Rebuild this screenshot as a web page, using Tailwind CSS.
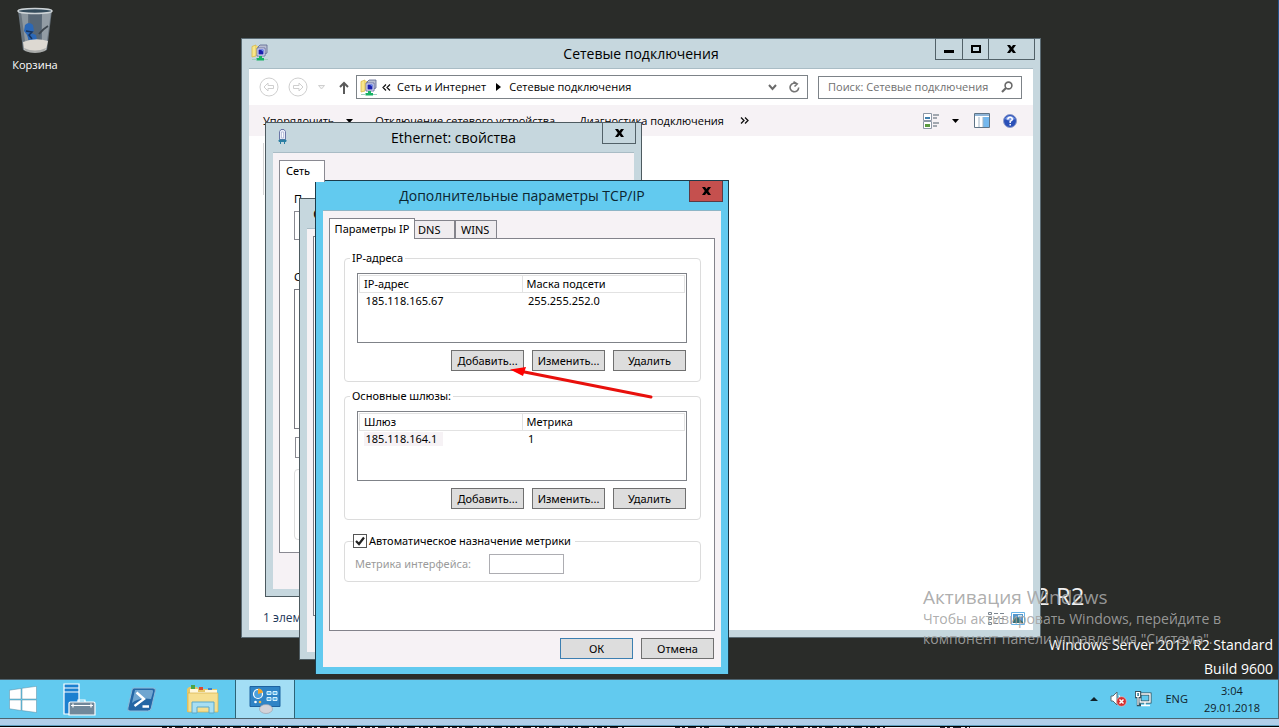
<!DOCTYPE html>
<html lang="ru">
<head>
<meta charset="utf-8">
<title>Сетевые подключения</title>
<script src="https://cdn.jsdelivr.net/npm/@tailwindcss/browser@4"></script>
</head>
<body class="h-screen overflow-hidden flex flex-col bg-[#2a2c29] font-['Open_Sans','Noto_Sans',sans-serif] text-[11px] leading-4 text-black cursor-default">

<svg class="hidden">
  <defs>
    <symbol id="net" viewBox="0 0 17 17">
      <path d="M1 2.500 5 1v11l-4 1z" fill="#f7e78c" stroke="#d9b945" stroke-width=".8"/>
      <path d="M5 2h3v9H5z" fill="#f3dc6c"/>
      <path d="M9 1h7v8l-2 1H7V3z" fill="#b9bfd0" stroke="#5c6590" stroke-width=".8"/>
      <path d="M6 4h8v8H6z" fill="#eef1fb" stroke="#5861a0" stroke-width=".8"/>
      <path d="M7.500 5.500h5v5h-5z" fill="#1a1fae"/>
      <path d="M9.500 5.500h3v2.500z" fill="#6b8df0"/>
      <path d="M8 12h3v2h2v2.500H5.500V14H8z" fill="#17b264"/>
      <path d="M1 15.500h4.500M13 15.500h4" stroke="#9fd0c0"/>
    </symbol>
    <symbol id="cross" viewBox="0 0 9 8">
      <path d="M0 0h3l1.500 2L6 0h3L6.200 4 9 8H6L4.500 6 3 8H0l2.800-4z" fill="currentColor"/>
    </symbol>
  </defs>
</svg>

<main class="relative flex-1 border-r border-[#24548c]">

  <!-- Desktop shortcut -->
  <a href="#" class="absolute left-0 top-1 w-[70px] flex flex-col items-center text-white">
    <svg class="w-[40px] h-[52px]" viewBox="0 0 40 52">
      <path d="M3 6 8 46q12 5 24 0l5-40z" fill="#69757f"/>
      <path d="M6 8l5 36h5L14 8z" fill="#b8c1c8" opacity=".45"/>
      <path d="M27 8l-2 36h6l5-36z" fill="#c5ccd2" opacity=".45"/>
      <path d="M13 10h14v26H13z" fill="#50606f" opacity=".7"/>
      <path d="M10 21q4-4 8 0l1 6-3 2 5 2 1 5-8 1-2-6-3-4z" fill="#2b68b7"/>
      <path d="M11 27l6 1-3 3 3 4" stroke="#17345e" stroke-width="1.500" fill="none"/>
      <path d="M24 30q4-5 9-8" stroke="#3d464e" stroke-width="2" fill="none"/>
      <path d="M8 38q12-5 25-1l-2 9q-10 4-22 0z" fill="#ddd9d2"/>
      <path d="M9 44q11 5 22 0l-1 3q-10 4-20 0z" fill="#a9aba9"/>
      <ellipse cx="20" cy="7" rx="17" ry="2.500" fill="#334a5a" stroke="#cdd3d6" stroke-width="1.500"/>
    </svg>
    <span class="mt-px">Корзина</span>
  </a>

  <p class="absolute left-[1036px] top-[580px] text-[24px] leading-8 text-[#f0f0f0]">2 R2</p>
  <p class="absolute right-[5px] top-[633px] text-right text-[14px] leading-6 text-white">Windows Server 2012 R2 Standard<br>Build 9600</p>

  <!-- Network connections window -->
  <section class="absolute left-[241px] top-[38px] w-[800px] h-[600px] border border-[#5b6b73] bg-[#c6d7de] px-[7px] pb-[7px] flex flex-col">
    <header class="relative h-[29px] shrink-0 flex items-center justify-center">
      <svg class="absolute left-[2px] top-[5px] w-[17px] h-[17px]"><use href="#net"/></svg>
      <h1 class="text-[14px] leading-5">Сетевые подключения</h1>
      <div class="absolute right-[-2px] top-[-1px] flex h-[22px] border border-[#526168]">
        <button aria-label="Свернуть" class="w-[27px] flex items-center justify-center border-r border-[#526168]"><span class="w-[10px] h-[3px] bg-black mt-1"></span></button>
        <button aria-label="Развернуть" class="w-[26px] flex items-center justify-center border-r border-[#526168]"><span class="w-[10px] h-[8px] border-2 border-black"></span></button>
        <button aria-label="Закрыть" class="w-[45px] flex items-center justify-center"><svg class="w-[9px] h-[8px]"><use href="#cross"/></svg></button>
      </div>
    </header>
    <div class="flex-1 bg-white border-t border-[#a9bcc5] flex flex-col">
      <nav class="flex items-center h-[36px] pl-[10px] pr-[11px] shrink-0">
        <button aria-label="Назад" class="w-[20px]"><svg class="w-[20px] h-[20px]" viewBox="0 0 20 20" fill="none" stroke="#cfcfcf"><circle cx="10" cy="10" r="9"/><path d="M5 10l4-4v2.500h5.500v3H9V14z"/></svg></button>
        <button aria-label="Вперёд" class="ml-[9px] w-[20px]"><svg class="w-[20px] h-[20px]" viewBox="0 0 20 20" fill="none" stroke="#cfcfcf"><circle cx="10" cy="10" r="9"/><path d="M15 10l-4-4v2.500H5.500v3H11V14z"/></svg></button>
        <svg class="ml-[10px] w-[7px] h-[5px]" viewBox="0 0 7 5"><path d="M.5.500h6l-3 3.500z" fill="#f4f4f4" stroke="#cfcfcf"/></svg>
        <button aria-label="Вверх" class="ml-[14px] w-[10px]"><svg class="w-[10px] h-[13px]" viewBox="0 0 10 13" fill="none" stroke="#5a5a5a" stroke-width="2"><path d="M5 13V2M1 6l4-4 4 4"/></svg></button>
        <div class="ml-[7px] flex-1 h-[24px] border border-[#7d8388] flex items-center pl-[3px] pr-[7px]">
          <svg class="w-[17px] h-[17px]"><use href="#net"/></svg>
          <svg class="ml-[5px] w-[9px] h-[7px]" viewBox="0 0 9 7" fill="none" stroke="#111" stroke-width="1.200"><path d="M4 .5l-3 3 3 3M8 .5l-3 3 3 3"/></svg>
          <a href="#" class="ml-[6px]">Сеть и Интернет</a>
          <svg class="ml-[10px] w-[5px] h-[8px]" viewBox="0 0 5 8"><path d="M0 0l5 4-5 4z"/></svg>
          <a href="#" class="ml-[8px]">Сетевые подключения</a>
          <svg class="ml-auto w-[9px] h-[7px]" viewBox="0 0 9 7" fill="none" stroke="#6a6a6a" stroke-width="2"><path d="M1 1l3.500 4L8 1"/></svg>
          <svg class="ml-[12px] w-[11px] h-[12px]" viewBox="0 0 11 12" fill="none" stroke="#757575" stroke-width="1.600"><path d="M8 3A4.300 4.300 0 1 0 9.700 6.500M4.500 0.800 8.200 3 5.500 5.500"/></svg>
        </div>
        <label class="ml-[10px] w-[204px] h-[23px] border border-[#7d8388] flex items-center pl-[9px] pr-[8px]">
          <input aria-label="Поиск" placeholder="Поиск: Сетевые подключения" class="min-w-0 flex-1 placeholder:text-[#6f6f6f] outline-none">
          <svg class="w-[12px] h-[12px]" viewBox="0 0 12 12" fill="none" stroke="#6a6a6a" stroke-width="1.600"><circle cx="7.500" cy="4.500" r="3.400"/><path d="M5 7 1 11" stroke-width="2.200"/></svg>
        </label>
      </nav>
      <div class="h-[31px] shrink-0 bg-[#f6f2f5] flex items-center pl-[14px] pr-[16px]">
        <button class="flex items-center gap-[12px]">Упорядочить <svg class="w-[7px] h-[4px]" viewBox="0 0 7 4"><path d="M0 0h7L3.500 4z"/></svg></button>
        <button class="ml-[22px]">Отключение сетевого устройства</button>
        <button class="ml-[24px]">Диагностика подключения</button>
        <button aria-label="Ещё" class="ml-[16px]"><svg class="w-[9px] h-[7px]" viewBox="0 0 9 7" fill="none" stroke="#111" stroke-width="1.300"><path d="M1 .5l3 3-3 3M5 .5l3 3-3 3"/></svg></button>
        <button aria-label="Вид" class="ml-auto flex items-center gap-[13px]">
          <svg class="w-[16px] h-[16px]" viewBox="0 0 16 16"><path d="M.5.500h8v7h-8zM.5 8.500h8v7h-8z" fill="#fff" stroke="#8c97a5"/><path d="M2 4h5v2H2z" fill="#3f7fae"/><path d="M2 11h5v3H2z" fill="#5a9a3f"/><path d="M10 2h6M10 5h4M10 10h6M10 13h4" stroke="#4f5f6b"/></svg>
          <svg class="w-[7px] h-[4px]" viewBox="0 0 7 4"><path d="M0 0h7L3.500 4z"/></svg>
        </button>
        <button aria-label="Область просмотра" class="ml-[15px]"><svg class="w-[16px] h-[15px]" viewBox="0 0 16 15"><path d="M.5.500h15v14H.500z" fill="#fff" stroke="#5f7487"/><path d="M1 1h14v2H1z" fill="#8fb4d6"/><path d="M9 4h6v10H9z" fill="#74b8ee"/><path d="M5 4v10M9 4v10" stroke="#9fb4c6"/></svg></button>
        <button aria-label="Справка" class="ml-[13px]"><svg class="w-[14px] h-[14px]" viewBox="0 0 14 14"><circle cx="7" cy="7" r="6.500" fill="#2a50b8" stroke="#8d9ccb"/><path d="M2 5a5.500 5 0 0 1 10 0q-5 3-10 0z" fill="#7c9be6"/><path d="M4.800 5.500Q5 3.300 7.100 3.300T9.300 5.200Q9.300 6.300 7.200 7.300V9M7.200 10v1.500" fill="none" stroke="#fff" stroke-width="1.500"/></svg></button>
      </div>
      <div class="flex-1 pt-[7px] pl-[14px]"><div class="w-[60px] h-[52px] border-l border-[#d5d5d5]"></div></div>
      <footer class="h-[24px] flex items-center pl-[14px] pr-[8px] text-[12px] text-[#1e395b]">
        <span>1 элем</span>
        <svg class="ml-auto w-[16px] h-[13px]" viewBox="0 0 16 13" fill="none" stroke="#7c8791"><path d="M.5.500h3v2h-3zM.5 5.500h3v2h-3zM.5 10.500h3v2h-3zM6 1.500h4M12 1.500h4M6 6.500h4M12 6.500h4M6 11.500h4M12 11.500h4"/></svg>
        <svg class="ml-[7px] w-[14px] h-[13px]" viewBox="0 0 14 13"><path d="M.5.500h13v12H.500z" fill="#fff" stroke="#68b4e8"/><path d="M2 2h10v9H2z" fill="#5597cc"/><path d="M2 7l4-2 6 5v1H2z" fill="#356f74"/><path d="M7 3h4v2H7z" fill="#c5e4f6"/></svg>
      </footer>
    </div>
  </section>

  <!-- Ethernet properties -->
  <section class="absolute left-[265px] top-[122px] w-[377px] h-[475px] border border-[#4d5a60] bg-[#c6d7de] px-[7px] pb-[7px] flex flex-col">
    <header class="relative h-[29px] shrink-0 flex items-center justify-center">
      <svg class="absolute left-[5px] top-[5px] w-[9px] h-[17px]" viewBox="0 0 9 17"><path d="M1.500 3.500 3 1.500h3l1.500 2v8h-6z" fill="#e9ecf8" stroke="#6b76a6"/><path d="M3.500 4v6h2V4z" fill="#fff" stroke="#98a3c8" stroke-width=".6"/><path d="M1 12h7v1.500H1zM2.500 13v3M6.500 13v3" fill="#2b7fa3" stroke="#2b7fa3"/></svg>
      <h2 class="text-[14px] leading-5">Ethernet: свойства</h2>
      <button aria-label="Закрыть" class="absolute right-[-2px] top-[-1px] w-[34px] h-[22px] border border-[#526168] flex items-center justify-center"><svg class="w-[9px] h-[8px]"><use href="#cross"/></svg></button>
    </header>
    <div class="flex-1 bg-[#f6f2f5] border-t border-[#a9bcc5] px-[6px] pt-[7px] pb-[36px] flex flex-col font-['Noto_Sans',sans-serif]">
      <button class="relative z-10 w-[46px] h-[22px] -mb-px pl-[6px] pb-[2px] text-left bg-white border border-b-0 border-[#8a8a92]">Сеть</button>
      <div class="flex-1 border border-[#8a8a92] bg-white pl-[14px] pt-[9px]">
        <p>П</p>
        <div class="mt-[4px] w-[60px] h-[29px] border border-[#8a8a92]"></div>
        <p class="mt-[29px]">С</p>
        <div class="mt-[4px] w-[60px] h-[140px] border border-[#7a7a82]"></div>
        <div class="ml-px mt-[8px] w-[60px] h-[21px] border border-[#8a8a92]"></div>
        <div class="mt-[11px] w-[60px] h-[71px] border border-[#dcdcdc] rounded"></div>
      </div>
    </div>
  </section>

  <!-- Protocol properties, mostly behind the dialog -->
  <section class="absolute left-[299px] top-[198px] w-[400px] h-[462px] border border-[#4d5a60] bg-[#c6d7de] px-[7px] pb-[7px] flex flex-col">
    <header class="h-[29px] pl-[6px] pt-[4px] text-[15px] leading-5">С</header>
    <div class="flex-1 bg-[#f6f2f5] border-t border-[#a9bcc5] pt-[7px] px-[6px] pb-[36px] flex"><div class="flex-1 border border-[#7a7a82] bg-white"></div></div>
  </section>

  <!-- Advanced TCP/IP settings -->
  <section class="absolute left-[315px] top-[180px] w-[414px] h-[494px] border border-b-0 border-[#1c3b4a] bg-[#62caef] px-[7px] pb-[7px] flex flex-col">
    <header class="relative h-[29px] shrink-0 flex items-center justify-center">
      <h2 class="text-[14px] leading-5 text-[#0b2530]">Дополнительные параметры TCP/IP</h2>
      <button aria-label="Закрыть" class="absolute right-[-2px] top-0 w-[34px] h-[21px] bg-[#c5504e] border border-t-0 border-[#5c3a44] flex items-center justify-center"><svg class="w-[9px] h-[8px]"><use href="#cross"/></svg></button>
    </header>
    <form class="flex-1 bg-[#f6f2f5] border-t border-[#8db5c6] px-[6px] pt-[7px] pb-[8px] flex flex-col font-['Noto_Sans',sans-serif] leading-[14px]">
      <div class="relative z-10 flex items-end h-[21px] -mb-px">
        <button type="button" class="w-[86px] h-[21px] bg-white border border-b-0 border-[#83838b]">Параметры IP</button>
        <button type="button" class="w-[40px] h-[19px] bg-[#efecef] border border-l-0 border-[#83838b] text-left pl-[3px]">DNS</button>
        <button type="button" class="w-[42px] h-[19px] bg-[#efecef] border border-[#83838b] text-left pl-[5px]">WINS</button>
      </div>
      <div class="flex-1 bg-white border border-[#83838b] pl-[14px] pr-[13px] pt-[12px]">
        <fieldset class="border border-[#dcdcdc] rounded pl-[12px] pr-[13px] pt-2 pb-[10px]">
          <legend class="-ml-[7px] px-[2px]">IP-адреса</legend>
          <div class="h-[70px] border border-[#7f8288] p-px">
            <table class="w-full table-fixed">
              <thead><tr class="h-[17px] text-left"><th class="font-normal border border-[#e2e2e2] pl-[4px] py-0">IP-адрес</th><th class="font-normal border border-[#e2e2e2] pl-[4px] py-0">Маска подсети</th></tr></thead>
              <tbody><tr class="h-[17px]"><td class="pl-[6px] py-0">185.118.165.67</td><td class="pl-[6px] py-0">255.255.252.0</td></tr></tbody>
            </table>
          </div>
          <div class="mt-[7px] mr-px flex justify-end gap-2">
            <button type="button" class="w-[73px] h-[21px] bg-[#dddddd] border border-[#707070]">Добавить...</button>
            <button type="button" class="w-[73px] h-[21px] bg-[#dddddd] border border-[#707070]">Изменить...</button>
            <button type="button" class="w-[73px] h-[21px] bg-[#dddddd] border border-[#707070]">Удалить</button>
          </div>
        </fieldset>
        <fieldset class="mt-[7px] border border-[#dcdcdc] rounded pl-[12px] pr-[13px] pt-2 pb-[10px]">
          <legend class="-ml-[7px] px-[2px]">Основные шлюзы:</legend>
          <div class="h-[70px] border border-[#7f8288] p-px">
            <table class="w-full table-fixed">
              <thead><tr class="h-[17px] text-left"><th class="font-normal border border-[#e2e2e2] pl-[4px] py-0">Шлюз</th><th class="font-normal border border-[#e2e2e2] pl-[4px] py-0">Метрика</th></tr></thead>
              <tbody><tr class="h-[17px]"><td class="pl-[4px] py-0"><span class="inline-block bg-[#f6f2f5] pl-[2px] pr-[6px]">185.118.164.1</span></td><td class="pl-[6px] py-0">1</td></tr></tbody>
            </table>
          </div>
          <div class="mt-[7px] mr-px flex justify-end gap-2">
            <button type="button" class="w-[73px] h-[21px] bg-[#dddddd] border border-[#707070]">Добавить...</button>
            <button type="button" class="w-[73px] h-[21px] bg-[#dddddd] border border-[#707070]">Изменить...</button>
            <button type="button" class="w-[73px] h-[21px] bg-[#dddddd] border border-[#707070]">Удалить</button>
          </div>
        </fieldset>
        <fieldset class="mt-[14px] border border-[#dcdcdc] rounded pl-[10px] pt-[6px] pb-[7px]">
          <legend class="-ml-[2px] pr-[4px]">
            <label class="flex items-center gap-[2px]">
              <span class="relative grid size-[14px]">
                <input type="checkbox" checked class="peer appearance-none size-[14px] border border-[#555] bg-white">
                <svg class="absolute left-[2px] top-[2px] w-[10px] h-[10px] hidden peer-checked:block pointer-events-none" viewBox="0 0 10 10" fill="none" stroke="#222" stroke-width="2.200"><path d="M1 5l3 3 5-6.500"/></svg>
              </span>
              Автоматическое назначение метрики
            </label>
          </legend>
          <div class="flex items-center">
            <label for="metric" class="w-[134px] text-[#9b9b9b]">Метрика интерфейса:</label>
            <input id="metric" disabled class="w-[75px] h-[20px] border border-[#adadb2] bg-white px-1">
          </div>
        </fieldset>
      </div>
      <div class="mt-[7px] mr-px flex justify-end gap-2">
        <button type="button" class="w-[73px] h-[21px] bg-[#dddddd] border border-[#3c7fb1]">ОК</button>
        <button type="button" class="w-[73px] h-[21px] bg-[#dddddd] border border-[#707070]">Отмена</button>
      </div>
    </form>
  </section>

  <!-- Pointer arrow -->
  <svg class="absolute left-[510px] top-[364px] w-[144px] h-[36px] pointer-events-none" viewBox="0 0 144 36"><path d="M12 7.500 141 33" stroke="#e8100c" stroke-width="3" stroke-linecap="round"/><path d="M0 5.500 16 3l-3 9z" fill="#f00"/></svg>

  <!-- Activation notice -->
  <div class="absolute left-[923px] top-[585px] w-[320px] text-[#a4a4a4]/90 pointer-events-none">
    <p class="text-[19px] leading-6">Активация Windows</p>
    <p class="text-[14px] leading-5">Чтобы активировать Windows, перейдите в компонент панели управления "Система".</p>
  </div>
</main>

<!-- Taskbar -->
<footer class="h-[40px] shrink-0 bg-[#62caef] border-y border-r border-[#4d6470] flex items-stretch">
  <button aria-label="Пуск" class="w-[46px] flex items-center justify-center"><svg class="w-[28px] h-[27px]" viewBox="0 0 28 27" fill="#fff" stroke="#5b8ca3" stroke-width=".5"><path d="M.5 4.200 12 2.500V13H.500zM13 2.300 27.500.300V13H13zM.5 14H12v10.500L.500 22.800zM13 14h14.500v12.500L13 24.600z"/></svg></button>
  <button aria-label="Диспетчер серверов" class="w-[66px] flex items-center justify-center"><svg class="w-[33px] h-[33px]" viewBox="0 0 33 33" stroke="#fff" stroke-width="1.200"><path d="M1 1h15v30H1z" fill="#1b80d0"/><path d="M1 5h15M1 9h15" /><path d="M15 20v-3h7v3" fill="none"/><path d="M6 20.500q0-1.500 1.500-1.500h23q1.500 0 1.500 1.500V32H6z" fill="#71889a"/><path d="M8 22.500h22M10 20.500v4M28 20.500v4" fill="none"/></svg></button>
  <button aria-label="PowerShell" class="w-[59px] flex items-center justify-center"><svg class="w-[30px] h-[25px]" viewBox="0 0 30 25"><path d="M7 1h19q3 0 2.300 3l-4 17q-.6 3-3.600 3H3Q0 24 .9 21L5 3q.4-2 2-2z" fill="#2466a5" stroke="#8fb9d8"/><path d="M8 3h17q1.500 0 1 2l-2 7Q12 10 5 16z" fill="#6fa5d0"/><path d="M9.500 5.500 17 12 7.500 19M15.500 19.500h6.500" stroke="#fff" stroke-width="2.400" fill="none"/></svg></button>
  <button aria-label="Проводник" class="w-[64px] flex items-center justify-center"><svg class="w-[34px] h-[30px]" viewBox="0 0 34 30"><path d="M3 3h8l2 2h18v23H1V5z" fill="#e7c767"/><path d="M5 1h4v4H5z" fill="#49a548"/><path d="M13 3h4v3h-4z" fill="#d94a32"/><path d="M22 4h4v3h-4z" fill="#3d82cc"/><path d="M4 5h8v3h7V6h12v4H4z" fill="#fff7dc"/><path d="M2 9h30v19H2z" fill="#f6df91" stroke="#d6b24f" stroke-width=".7"/><path d="M6 29V18h22v11h-5v-6H11v6z" fill="#a8dff3" stroke="#5aa9cb"/></svg></button>
  <button aria-label="Сетевые подключения" class="w-[60px] flex items-center justify-center bg-[#a3def5] border-x border-[#2d6377]"><svg class="w-[32px] h-[29px]" viewBox="0 0 32 29"><path d="M1 1.500h30v20H1z" fill="#2f84c6" stroke="#1d62a0"/><circle cx="9" cy="9" r="4.500" fill="#4da0dc" stroke="#fff" stroke-width="1.200"/><path d="M9 9V3.500a5.500 5.500 0 0 1 5 4z" fill="#f2a42c"/><path d="M18 6.500h4v3h-4zM24 6.500h4v3h-4zM18 12.500h4v3h-4zM24 12.500h4v3h-4z" fill="#5cb4e8" stroke="#d5f0fc"/><circle cx="6.500" cy="17" r="1.300" fill="#fff"/><circle cx="11" cy="17" r="1.300" fill="#f5b942"/><ellipse cx="17" cy="24" rx="6.500" ry="4.500" fill="#d3d3d9" stroke="#9a9aa5" stroke-width=".6"/></svg></button>
  <div class="ml-auto flex items-center text-[#10222b]">
    <button aria-label="Скрытые значки"><svg class="w-[8px] h-[4px]" viewBox="0 0 8 4"><path d="M4 0l4 4H0z" fill="#10222b"/></svg></button>
    <svg class="ml-[12px] w-[17px] h-[16px]" viewBox="0 0 17 16"><path d="M1 5h2l4-4v13l-4-4H1z" fill="#fff" stroke="#5a6a72"/><path d="M9 4q2 3 0 6" fill="none" stroke="#fff"/><circle cx="11.500" cy="10.500" r="4.800" fill="#d32f2f" stroke="#f6c4c4" stroke-width=".6"/><path d="M9.500 8.500l4 4M13.500 8.500l-4 4" stroke="#fff" stroke-width="1.500"/></svg>
    <svg class="ml-[8px] w-[17px] h-[16px]" viewBox="0 0 17 16" fill="none"><path d="M5 3h10v8H5z" stroke="#35505c" stroke-width="3"/><path d="M5 3h10v8H5zM10 11v3M6 14.500h9" stroke="#fff" stroke-width="1.400"/><path d="M1 1h4v5H1zM3 6v8h3" stroke="#35505c" stroke-width="2.400"/><path d="M1.500 1.500h3v4h-3zM3 6v8" stroke="#fff" stroke-width="1.200"/></svg>
    <span class="ml-[13px]">ENG</span>
    <p class="ml-[16px] mr-[18px] text-center leading-[17px]">3:04<br>29.01.2018</p>
  </div>
</footer>
<div class="h-[7px] shrink-0 bg-[#b0cee9] border-b border-[#5e9fc0]"></div>
<div class="h-px shrink-0 bg-black"></div>
<svg class="h-px w-full shrink-0 bg-[#f4eef6]" viewBox="0 0 1279 1" preserveAspectRatio="none"><path d="M162 .5H625M675 .5H710M725 .5H885M940 .5H970" stroke="#2a2634" stroke-dasharray="5 2 3 3 8 4 2 2"/></svg>
</body>
</html>
